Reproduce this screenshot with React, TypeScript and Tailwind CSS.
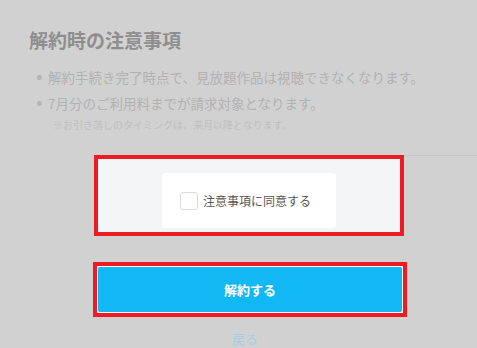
import React from "react";

const font = { fontFamily: '"Noto Sans CJK JP", "Noto Sans", sans-serif' };

function Bullet({ children }: { children: React.ReactNode }) {
  return (
    <li className="flex items-center">
      <span className="ml-[37px] mr-[6px] h-[5px] w-[5px] rounded-full bg-[#b4b4b4]" />
      <span className="text-[13.5px] leading-[26px] text-[#b2b2b2]">{children}</span>
    </li>
  );
}

export default function App() {
  return (
    <div className="h-[348px] w-[477px] overflow-hidden bg-[#d1d1d1]" style={font}>
      <h1 className="pl-[29px] pt-[25px] text-[19px] font-bold leading-[30px] text-[#8e8e8e]">
        解約時の注意事項
      </h1>
      <ul className="mt-[9px]">
        <Bullet>解約手続き完了時点で、見放題作品は視聴できなくなります。</Bullet>
        <Bullet>7月分のご利用料までが請求対象となります。</Bullet>
      </ul>
      <p className="pl-[53px] text-[10px] leading-[18px] text-[#c0c0c0]">
        ※お引き落しのタイミングは、来月以降となります。
      </p>

      <div className="mt-[21px] flex">
        <div className="ml-[94px] h-[81px] w-[310px] border-4 border-[#ed1c24] bg-[#f4f5f7] pt-[14px]">
          <div className="mx-auto flex h-[55px] w-[174px] items-center rounded-[3px] bg-white pl-[18px]">
            <span className="h-[18px] w-[18px] rounded-[3px] border border-[#dcdcdc] bg-white" />
            <span className="ml-[5px] text-[12px] text-[#555]">注意事項に同意する</span>
          </div>
        </div>
        <div className="flex-1 border-t border-[#c6c6c6]" />
      </div>

      <div className="ml-[93px] mt-[26px] h-[55px] w-[314px] border-4 border-[#ed1c24] bg-[#eef6fa] p-px">
        <button className="flex h-full w-full items-center justify-center rounded-[2px] bg-[#12b8f3] text-[13px] font-bold text-white">
          解約する
        </button>
      </div>

      <p className="ml-[13px] mt-[12px] text-center text-[13px] leading-[20px] text-[#a6cde0]">戻る</p>
    </div>
  );
}
